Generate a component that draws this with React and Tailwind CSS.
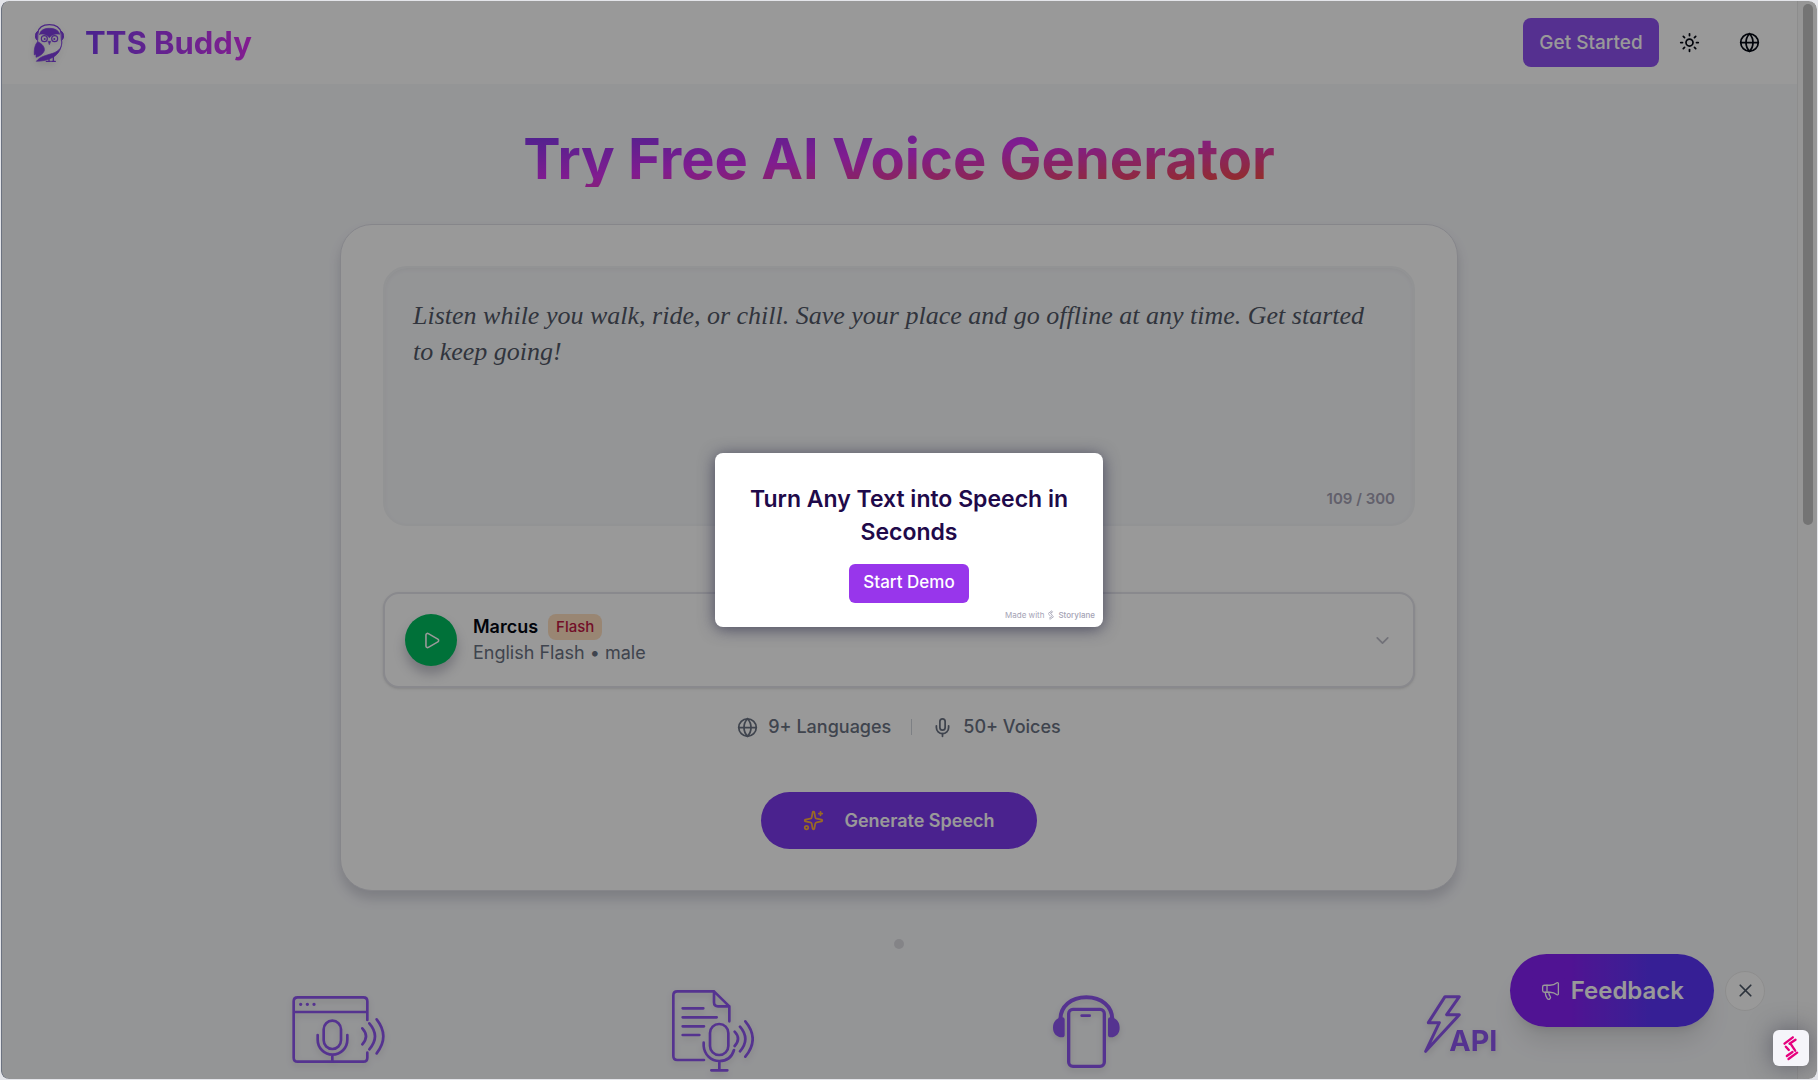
import React, { useState } from "react";
import { ChevronDown, Globe, Megaphone, Mic, Play, Sparkles, Sun, X } from "lucide-react";

const SAMPLE_TEXT =
  "Listen while you walk, ride, or chill. Save your place and go offline at any time. Get started to keep going!";
const MAX_CHARS = 300;

function OwlLogo() {
  return (
    <svg viewBox="96 66 96 120" className="w-8 h-10 text-[#7f3fe0] drop-shadow-md" fill="none" stroke="currentColor" strokeLinecap="round" strokeLinejoin="round">
      <path d="M110 96C113 78 127 71 145 71s32 7 36 25" strokeWidth="4" />
      <path d="M110 91c-8 3-10 22-1 27zM181 91c8 3 10 22 1 27z" fill="currentColor" strokeWidth="3" />
      <path d="M116 100c2-13 14-18 29-18s28 5 31 18c-11-3-23 0-31 10-8-10-18-13-29-10z" fill="currentColor" strokeWidth="2" />
      <circle cx="130" cy="113" r="9" strokeWidth="3.5" />
      <circle cx="161" cy="113" r="9" strokeWidth="3.5" />
      <circle cx="131" cy="114" r="3" fill="currentColor" stroke="none" />
      <circle cx="160" cy="114" r="3" fill="currentColor" stroke="none" />
      <path d="M142 121h7l-3.500 9z" fill="currentColor" strokeWidth="2" />
      <path d="M110 122c-9 9-11 24-10 40l5-3v10c12-4 22-11 25-20 2-10-6-21-20-27z" fill="currentColor" strokeWidth="2" />
      <path d="M182 119c3 18-7 31-27 38-20 6-38 10-49 24 15 0 34-3 50-12 18-11 28-29 26-50z" fill="currentColor" strokeWidth="2" />
      <path d="M144 170v11M157 165v16M136 181h12M152 181h11" strokeWidth="4" />
    </svg>
  );
}

function StorylaneMark({ className }) {
  return (
    <svg viewBox="0 0 105 108" className={className} fill="none" stroke="currentColor" strokeWidth="7" strokeLinecap="round">
      <path d="M33 41 58 22M48 41l18-12M37 50l9 10M53 44l12 18M40 78l17-12M45 87l26-19" />
    </svg>
  );
}

const featureIcon = "w-24 h-[88px] text-[#8e55f0] drop-shadow-md";

function WebPageIcon() {
  return (
    <svg viewBox="0 0 288 264" className={featureIcon} fill="none" stroke="currentColor" strokeWidth="8" strokeLinecap="round">
      <path d="M232 105V49q0-12-12-12H23q-12 0-12 12v169q0 12 12 12h197q12 0 12-12v-15M11 81h221" />
      <path d="M32 58h.1M52 58h.1M72 58h.1" strokeWidth="10" />
      <rect x="101" y="107" width="52" height="85" rx="26" />
      <path d="M83 150v14a44.500 45 0 0 0 89 0v-14M127 209v21" />
      <path d="M217 130q22 24 0 48M238 115q34 39 0 78M260 103q40 51 0 102" />
    </svg>
  );
}

function DocumentIcon() {
  return (
    <svg viewBox="0 0 288 264" className={featureIcon} fill="none" stroke="currentColor" strokeWidth="8" strokeLinecap="round" strokeLinejoin="round">
      <path d="M120 225H40q-12 0-12-12V31q0-12 12-12h110l46 45v45M150 19v33q0 12 12 12h34" />
      <path d="M56 70h62M56 97h102M56 124h64M56 150h50" />
      <rect x="138" y="117" width="55" height="93" rx="27" />
      <path d="M119 173v10c2 26 22 45 47 45 22 0 38-13 44-33M166 228v28M142 256h48" />
      <path d="M212 140q20 21 0 43M228 125q32 37 0 74M244 109q44 53 0 106" />
    </svg>
  );
}

function PhoneIcon() {
  return (
    <svg viewBox="0 0 288 264" className={featureIcon} fill="none" stroke="currentColor" strokeWidth="10" strokeLinecap="round">
      <rect x="92" y="73" width="107" height="171" rx="13" />
      <path d="M131 92h24" strokeWidth="8" />
      <path d="M67 104c0-40 32-67 78-67s78 27 78 67" strokeWidth="12" />
      <path d="M80 103q0-7-9-6c-17 2-26 15-26 31s9 28 27 29q8 0 8-8zM210 103q0-7 9-6c17 2 26 15 26 31s-9 28-27 29q-8 0-8-8z" fill="currentColor" stroke="none" />
    </svg>
  );
}

function ApiIcon() {
  return (
    <svg viewBox="0 0 288 264" className={featureIcon} fill="none">
      <path d="M99 35h43l-38 54h38L41 199l41-86H49z" stroke="currentColor" strokeWidth="9" strokeLinejoin="round" />
      <text x="112" y="199" fill="currentColor" fontSize="86" fontWeight="700">
        API
      </text>
    </svg>
  );
}

function Header() {
  return (
    <header className="flex items-center justify-between h-[83px] shrink-0 pl-8 pr-6 bg-white">
      <a href="#" className="flex items-center gap-5">
        <OwlLogo />
        <span className="text-[31px] leading-10 font-bold bg-linear-to-r from-[#7c3aed] to-[#d92ff0] bg-clip-text text-transparent">
          TTS Buddy
        </span>
      </a>
      <div className="flex items-center">
        <button className="h-[49px] w-[136px] pt-0.5 mr-1.5 rounded-lg bg-[#8e50f0] text-white text-[19px] font-medium">
          Get Started
        </button>
        <button aria-label="Toggle theme" className="flex items-center justify-center size-12 mr-3 text-gray-950">
          <Sun size={21} />
        </button>
        <button aria-label="Change language" className="flex items-center justify-center size-12 text-gray-950">
          <Globe size={21} />
        </button>
      </div>
    </header>
  );
}

function VoicePicker() {
  return (
    <div className="flex items-center h-24 mt-[66px] px-5 rounded-2xl border-2 border-[#e4e4eb] bg-white shadow-sm">
      <button aria-label="Play voice sample" className="flex items-center justify-center size-[52px] shrink-0 rounded-full bg-[#00bd5f] text-white shadow-[0_8px_12px_rgba(60,60,90,0.3)]">
        <Play size={19} />
      </button>
      <div className="flex-1 ml-4">
        <div className="flex items-center gap-2.5">
          <span className="text-lg leading-[26px] font-semibold text-gray-950">Marcus</span>
          <span className="h-[26px] px-2 rounded-lg bg-[#ffdfc0] text-[15px] leading-[26px] font-medium text-[#c01843]">
            Flash
          </span>
        </div>
        <p className="text-lg leading-[26px] text-gray-500">English Flash • male</p>
      </div>
      <button aria-label="Choose voice" className="text-[#bdbdc9]">
        <ChevronDown size={21} />
      </button>
    </div>
  );
}

function GeneratorCard() {
  const [text, setText] = useState(SAMPLE_TEXT);

  return (
    <section className="w-full max-w-[1118px] mt-[37px] px-[42px] py-[41px] rounded-[32px] border border-[#dfdfe7] bg-white shadow-[0_8px_12px_rgba(60,60,90,0.2)]">
      <div className="flex flex-col h-[260px] rounded-3xl border-2 border-[#f4f5f7] bg-[#f7f8fb] shadow-[inset_0_2px_4px_rgba(0,0,0,0.04)]">
        <textarea
          aria-label="Text to convert"
          maxLength={MAX_CHARS}
          value={text}
          onChange={(e) => setText(e.target.value)}
          className="flex-1 w-full p-7 pt-[30px] pb-0 resize-none outline-none overflow-hidden bg-transparent font-['Georgia','Liberation_Serif',serif] italic text-[26px] leading-9 text-[#525866]"
        />
        <div className="pr-[18px] pb-[13px] text-right text-[15px] leading-6 font-semibold text-[#a3a1b3]">
          {text.length} / {MAX_CHARS}
        </div>
      </div>

      <VoicePicker />

      <div className="flex items-center justify-center mt-[25px] text-lg leading-7 font-medium text-gray-500">
        <Globe size={21} />
        <span className="ml-2.5">9+ Languages</span>
        <span className="w-px h-4 mx-5 bg-gray-300" />
        <Mic size={21} />
        <span className="ml-2.5">50+ Voices</span>
      </div>

      <div className="flex justify-center mt-[51px]">
        <button className="flex items-center justify-center gap-5 h-[57px] px-[42px] rounded-full bg-[#7c3aed] text-white text-lg font-semibold">
          <Sparkles size={21} className="text-[#ffb03c]" />
          Generate Speech
        </button>
      </div>
    </section>
  );
}

function DemoModal({ onStart }) {
  return (
    <div role="dialog" aria-label="Start demo" className="flex flex-col items-center w-[388px] pt-[30px] rounded-lg bg-white shadow-[0_2px_16px_rgba(40,40,70,0.7)]">
      <h2 className="px-8 text-center text-[23px] leading-[33px] font-semibold text-[#1f0a4a]">
        Turn Any Text into Speech in Seconds
      </h2>
      <button onClick={onStart} className="h-[39px] mt-[15px] px-3.5 pb-0.5 rounded-md bg-[#9836eb] text-white text-[17px] font-medium">
        Start Demo
      </button>
      <div className="flex items-center self-end h-6 pr-2 text-[8px] leading-3 text-[#a5a3b5]">
        Made with
        <StorylaneMark className="size-3.5" />
        <span className="font-medium">Storylane</span>
      </div>
    </div>
  );
}

export default function App() {
  const [showDemo, setShowDemo] = useState(true);

  return (
    <div className="h-screen p-px bg-[#e4e5ea] font-['Inter',sans-serif]">
      <div className="relative flex h-full rounded-lg overflow-hidden bg-[#f7f8fb]">
        <div className="flex-1 flex flex-col min-w-0 overflow-hidden">
          <Header />
          <main className="flex flex-col items-center pt-[47px] px-6">
            <h1 className="text-[56px] leading-none font-bold bg-linear-to-br/srgb from-[#7c3aed] via-[#d62ff0] via-45% to-[#f9502e] bg-clip-text text-transparent">
              Try Free AI Voice Generator
            </h1>
            <GeneratorCard />
            <span className="size-2.5 mt-12 rounded-full bg-[#dcdce2]" />
            <div className="grid grid-cols-4 justify-items-center w-full max-w-[1496px] mt-9">
              <WebPageIcon />
              <DocumentIcon />
              <PhoneIcon />
              <ApiIcon />
            </div>
          </main>
        </div>

        {/* Scrollbar */}
        <div className="flex justify-center w-5 shrink-0 pt-[3px] border-l border-[#ebebeb] bg-[#fafafa]">
          <div className="w-2.5 h-[48.5%] rounded-full bg-[#c1c1c1]" />
        </div>

        {/* Floating feedback */}
        <div className="absolute right-[52px] bottom-[52px] flex items-center gap-[11px]">
          <button className="flex items-center gap-2.5 h-[73px] px-[30px] rounded-full bg-linear-to-r from-[#8520f5] from-30% to-[#5a35f8] to-70% text-white text-2xl font-semibold shadow-xl">
            <Megaphone size={21} strokeWidth={1.5} />
            Feedback
          </button>
          <button aria-label="Dismiss feedback" className="flex items-center justify-center size-10 rounded-full border border-[#ececec] bg-white text-gray-600">
            <X size={21} />
          </button>
        </div>

        {showDemo && (
          <div className="absolute inset-0 flex items-center justify-center rounded-lg bg-black/40 shadow-[inset_1px_0_0_#6b7280]">
            <DemoModal onStart={() => setShowDemo(false)} />
          </div>
        )}

        <a
          href="#"
          aria-label="Storylane"
          className="absolute right-2 bottom-[13px] flex items-center justify-center size-9 rounded-md bg-[#f5f5fa] text-[#e6007e] shadow-[0_0_24px_rgba(40,40,60,0.5)]"
        >
          <StorylaneMark className="size-9" />
        </a>
      </div>
    </div>
  );
}
